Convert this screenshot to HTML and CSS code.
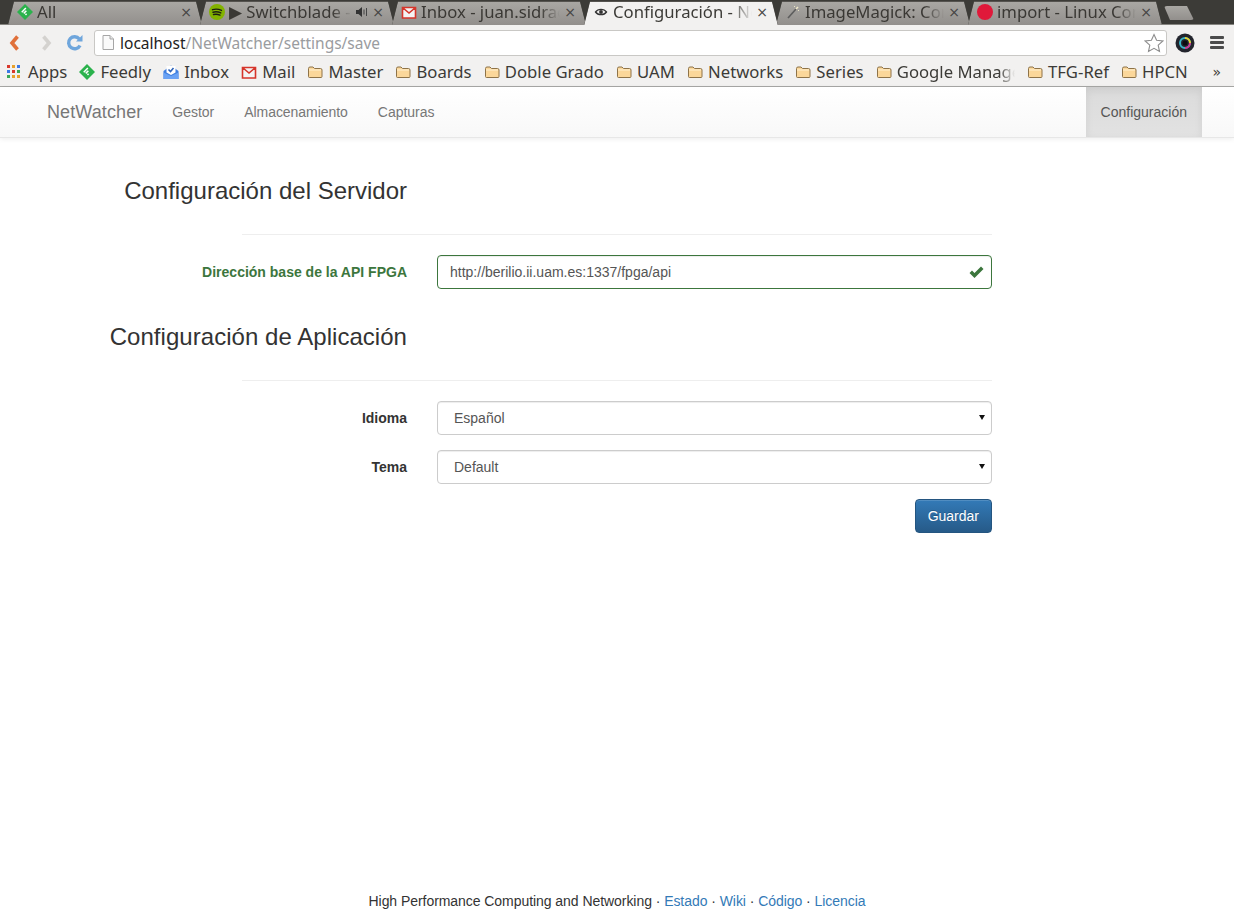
FILE: index.html
```html
<!DOCTYPE html>
<html lang="es">
<head>
<meta charset="utf-8">
<title>Configuración - NetWatcher</title>
<link rel="stylesheet" href="styles.css">
</head>
<body>
<svg class="defs" width="0" height="0" aria-hidden="true">
  <symbol id="folder" viewBox="0 0 16 16"><path d="M1.500 4.500a1.500 1.500 0 0 1 1.500-1.500h3l1.500 1.500h6a1.500 1.500 0 0 1 1.500 1.500v6.500a1 1 0 0 1-1 1h-11.500a1 1 0 0 1-1-1z" fill="#fbd79a" stroke="#8e7348" stroke-width="1"/><path d="M2 6h12" stroke="#fff1d2" stroke-width="1"/></symbol>
  <symbol id="feedly" viewBox="0 0 16 16"><path d="M8 0 16 8 8 16 0 8z" fill="#2bb24c"/><path d="M8.300 3.500 4.200 7.700l1.100 1.100L9.400 4.600zM8.800 6.200 6.200 8.800l1.100 1.100 2.600-2.600zM9 9.200l-1.100 1.100L9 11.400l1.100-1.100z" fill="#fff"/></symbol>
  <symbol id="gmail" viewBox="0 0 16 16"><path d="M1 3h14v11H1z" fill="#f4f4f4"/><path d="M1.500 14V3.500h13V14zM1.500 3.500 8 9l6.500-5.500" fill="none" stroke="#d6352b" stroke-width="1.600"/></symbol>
</svg>

<header class="browser">
  <div class="tabstrip">
    <div class="tab">
      <svg class="fav" viewBox="0 0 16 16"><use href="#feedly"/></svg>
      <span class="tabtitle">All</span><span class="tabx">×</span>
    </div>
    <div class="tab">
      <svg class="fav" viewBox="0 0 16 16"><circle cx="8" cy="8" r="8" fill="#83b300"/><path d="M3.500 5.700c3-.9 6-.7 9 .7M4 8.200c2.600-.7 5.200-.5 7.800.7M4.500 10.500c2.200-.5 4.400-.4 6.500.6" fill="none" stroke="#1d1f12" stroke-width="1.400" stroke-linecap="round"/></svg>
      <span class="tabtitle">▶ Switchblade - Spotify</span>
      <svg class="speaker" viewBox="0 0 12 10"><path d="M0 3h2.500L6 0v10L2.500 7H0z" fill="#333"/><path d="M8 2.500v5M10.500 1v8" stroke="#444" stroke-width="1"/></svg>
      <span class="tabx">×</span>
    </div>
    <div class="tab">
      <svg class="fav" viewBox="0 0 16 16"><use href="#gmail"/></svg>
      <span class="tabtitle">Inbox - juan.sidrach@uam.es</span><span class="tabx">×</span>
    </div>
    <div class="tab tab-active">
      <svg class="fav" viewBox="0 0 16 16"><path d="M2.500 8C5 4.500 11 4.500 13.500 8 11 11.500 5 11.500 2.500 8z" fill="none" stroke="#333" stroke-width="1.300"/><circle cx="8" cy="8" r="1.900" fill="#333"/></svg>
      <span class="tabtitle">Configuración - NetWatcher</span><span class="tabx">×</span>
    </div>
    <div class="tab">
      <svg class="fav" viewBox="0 0 16 16"><path d="M3 14 11 5" stroke="#5d5d5d" stroke-width="1.600"/><path d="M11 5l2-2" stroke="#f1e9c9" stroke-width="1.600"/><path d="M13 6.500h1M9.500 2v1" stroke="#e8e2c5" stroke-width="1"/></svg>
      <span class="tabtitle">ImageMagick: Command-line</span><span class="tabx">×</span>
    </div>
    <div class="tab">
      <svg class="fav" viewBox="0 0 16 16"><circle cx="8" cy="8" r="8" fill="#e0193a"/></svg>
      <span class="tabtitle">import - Linux Command</span><span class="tabx">×</span>
    </div>
    <div class="newtab"></div>
  </div>

  <div class="toolbar">
    <svg class="navbtn" viewBox="0 0 16 18"><path d="M10.500 2.500 5 9l5.500 6.500" fill="none" stroke="#e0703a" stroke-width="3.600"/></svg>
    <svg class="navbtn navbtn-fwd" viewBox="0 0 16 18"><path d="M5.500 2.500 11 9l-5.500 6.500" fill="none" stroke="#d4d2cf" stroke-width="3.600"/></svg>
    <svg class="navbtn navbtn-reload" viewBox="0 0 18 18"><path d="M14 11.500A6 6 0 1 1 13.300 5" fill="none" stroke="#6fa6dc" stroke-width="3.400"/><path d="M10 7.500h6.500V1z" fill="#6fa6dc"/></svg>
    <div class="omnibox">
      <svg class="pageicon" viewBox="0 0 12 15"><path d="M1 .5h7l3.500 3.500v10.500H1z" fill="#fafafa" stroke="#a6a6a6"/><path d="M8 .5V4h3.500" fill="#e6e6e6" stroke="#a6a6a6"/></svg>
      <span class="url"><span class="host">localhost</span>/NetWatcher/settings/save</span>
      <svg class="star" viewBox="0 0 20 20"><path d="M10 1.500l2.600 5.800 6.300.7-4.700 4.200 1.300 6.200L10 15.300l-5.500 3.100 1.300-6.200L1.100 8l6.300-.7z" fill="#fff" stroke="#8d8d8d" stroke-width="1.100"/></svg>
    </div>
    <svg class="ext" viewBox="0 0 20 20"><circle cx="10" cy="10" r="9.500" fill="#23252d"/><circle cx="10" cy="10" r="5" fill="none" stroke="#38b6c9" stroke-width="2"/><path d="M10 5a5 5 0 0 1 5 5" fill="none" stroke="#e9d12f" stroke-width="2"/><path d="M15 10a5 5 0 0 1-5 5" fill="none" stroke="#d6318f" stroke-width="2"/><circle cx="10" cy="10" r="2.500" fill="#0c0c10"/></svg>
    <div class="menu"><i></i><i></i><i></i></div>
  </div>

  <nav class="bookmarks">
    <a class="bm">
      <svg class="bmicon apps" viewBox="0 0 14 14"><g><rect x="0" y="0" width="3" height="3" fill="#d9382c"/><rect x="5" y="0" width="3" height="3" fill="#e8a12c"/><rect x="10" y="0" width="3" height="3" fill="#3b78e7"/><rect x="0" y="5" width="3" height="3" fill="#3b78e7"/><rect x="5" y="5" width="3" height="3" fill="#d9382c"/><rect x="10" y="5" width="3" height="3" fill="#3aa757"/><rect x="0" y="10" width="3" height="3" fill="#3aa757"/><rect x="5" y="10" width="3" height="3" fill="#e8a12c"/><rect x="10" y="10" width="3" height="3" fill="#e8a12c"/></g></svg>
      Apps</a>
    <a class="bm"><svg class="bmicon" viewBox="0 0 16 16"><use href="#feedly"/></svg>Feedly</a>
    <a class="bm"><svg class="bmicon" viewBox="0 0 16 16"><path d="M0.500 7 8 1.500 15.500 7v8H.5z" fill="#3f7fe0"/><path d="M3.500 2h9v6.500L8 11 3.500 8.500z" fill="#fff"/><path d="M5.500 5.500 7.500 7.500l3-3.500" fill="none" stroke="#2f63b8" stroke-width="1.600"/><path d="M.5 8.500 8 12l7.500-3.500V15H.5z" fill="#6aa2f4"/></svg>Inbox</a>
    <a class="bm"><svg class="bmicon" viewBox="0 0 16 16"><use href="#gmail"/></svg>Mail</a>
    <a class="bm"><svg class="bmicon" viewBox="0 0 16 16"><use href="#folder"/></svg>Master</a>
    <a class="bm"><svg class="bmicon" viewBox="0 0 16 16"><use href="#folder"/></svg>Boards</a>
    <a class="bm"><svg class="bmicon" viewBox="0 0 16 16"><use href="#folder"/></svg>Doble Grado</a>
    <a class="bm"><svg class="bmicon" viewBox="0 0 16 16"><use href="#folder"/></svg>UAM</a>
    <a class="bm"><svg class="bmicon" viewBox="0 0 16 16"><use href="#folder"/></svg>Networks</a>
    <a class="bm"><svg class="bmicon" viewBox="0 0 16 16"><use href="#folder"/></svg>Series</a>
    <a class="bm"><svg class="bmicon" viewBox="0 0 16 16"><use href="#folder"/></svg><span class="bmclip">Google Management</span></a>
    <a class="bm"><svg class="bmicon" viewBox="0 0 16 16"><use href="#folder"/></svg>TFG-Ref</a>
    <a class="bm"><svg class="bmicon" viewBox="0 0 16 16"><use href="#folder"/></svg>HPCN</a>
    <span class="bmmore">»</span>
  </nav>
</header>

<div class="navbar">
  <a class="brand">NetWatcher</a>
  <a class="navlink">Gestor</a>
  <a class="navlink">Almacenamiento</a>
  <a class="navlink">Capturas</a>
  <a class="navlink navlink-active">Configuración</a>
</div>

<main class="settings">
  <h3 class="section-title">Configuración del Servidor</h3>
  <hr class="rule">
  <div class="row row-ok">
    <label class="rowlabel" for="api">Dirección base de la API FPGA</label>
    <div class="field">
      <input id="api" class="control" type="text" value="http://berilio.ii.uam.es:1337/fpga/api">
      <svg class="tick" viewBox="0 0 15 12"><path d="M.5 7 3 4.500 5.500 7 12 .5 14.500 3 5.500 12z" fill="#3c763d"/></svg>
    </div>
  </div>
  <h3 class="section-title section-title-2">Configuración de Aplicación</h3>
  <hr class="rule">
  <div class="row">
    <label class="rowlabel" for="lang">Idioma</label>
    <div class="field field-select">
      <select id="lang" class="control"><option>Español</option></select>
    </div>
  </div>
  <div class="row">
    <label class="rowlabel" for="theme">Tema</label>
    <div class="field field-select">
      <select id="theme" class="control"><option>Default</option></select>
    </div>
  </div>
  <div class="actions"><button class="btn" type="button">Guardar</button></div>
</main>

<footer class="foot">High Performance Computing and Networking · <a>Estado</a> · <a>Wiki</a> · <a>Código</a> · <a>Licencia</a></footer>
</body>
</html>
```
FILE: styles.css
```css
* { box-sizing: border-box; }
html, body { margin: 0; height: 921px; overflow: hidden; }
body {
  display: flex;
  flex-direction: column;
  font: 14px/20px "Liberation Sans", Arial, sans-serif;
  color: #333;
  background: #fff;
}
.defs { position: absolute; }

/* browser chrome */
.browser { flex: none; height: 87px; background: #f2f1f0; border-bottom: 1px solid #a8a8a6; font-family: "Noto Sans", sans-serif; }
.tabstrip { display: flex; height: 25px; padding: 1px 0 0 7px; background: #3c3b37; border-bottom: 1px solid #85847f; }
.tab {
  position: relative;
  flex: none;
  display: flex;
  align-items: center;
  width: 196px;
  height: 24px;
  margin-right: -4px;
  padding: 0 11px 3px 10px;
  font-size: 16.700px;
  color: #3a3834;
  background: #55534f;
  clip-path: polygon(0 100%, 1px 100%, 7px 0, 189px 0, 195px 100%, 196px 100%);
}
.tab::before {
  content: "";
  position: absolute;
  inset: 1px 0 0;
  background: linear-gradient(#a9a7a3, #928f8c);
  clip-path: polygon(1px 100%, 7px 0, 189px 0, 195px 100%);
}
.tab > * { position: relative; }
.tab-active { z-index: 2; color: #3c3b37; background: #55534f; }
.tab-active::before { background: #f2f1f0; inset: 1px 0 -1px; }
.fav { flex: none; width: 16px; height: 16px; margin-right: 4px; }
.tabtitle {
  flex: 1;
  min-width: 0;
  white-space: nowrap;
  overflow: hidden;
  -webkit-mask-image: linear-gradient(to left, transparent, #000 20px);
  mask-image: linear-gradient(to left, transparent, #000 20px);
}
.speaker { flex: none; width: 12px; height: 10px; margin-left: 4px; }
.tabx { flex: none; width: 12px; margin-left: 4px; font-size: 14px; line-height: 20px; text-align: center; color: #444; font-family: "DejaVu Sans", sans-serif; }
.newtab {
  position: relative;
  flex: none;
  width: 30px;
  height: 14px;
  margin: 5px 0 0 5px;
  border-radius: 3px;
  background: linear-gradient(#a9a7a3, #928f8c);
  clip-path: polygon(0 0, 23px 0, 30px 100%, 6px 100%);
}

.toolbar { display: flex; align-items: center; height: 35px; padding: 0 0 0 7px; }
.navbtn { flex: none; width: 16px; height: 18px; margin-right: 15px; }
.navbtn-fwd { margin-right: 12px; }
.navbtn-reload { width: 18px; margin-right: 10px; }
.omnibox {
  flex: none;
  display: flex;
  align-items: center;
  width: 1073px;
  height: 26px;
  padding: 0 2px 0 7px;
  background: #fff;
  border: 1px solid #c9c8c5;
  border-radius: 3px;
}
.pageicon { flex: none; width: 12px; height: 15px; margin-right: 6px; }
.url { flex: 1; font-size: 15.500px; color: #9a9c9f; white-space: nowrap; }
.host { color: #222; }
.star { flex: none; width: 20px; height: 20px; }
.ext { flex: none; width: 20px; height: 20px; margin-left: 8px; }
.menu { flex: none; display: flex; flex-direction: column; gap: 2px; width: 14px; margin-left: 15px; }
.menu i { display: block; height: 3px; background: #4b4b4b; border-radius: 1px; }

.bookmarks { display: flex; align-items: center; height: 25px; padding: 0 0 2px 7px; gap: 12.200px; font-size: 16.700px; color: #3c3b37; white-space: nowrap; }
.bm { flex: none; display: flex; align-items: center; gap: 5px; }
.bmicon { flex: none; width: 16px; height: 16px; }
.apps { width: 14px; height: 14px; margin-right: 2px; }
.bmclip {
  display: block;
  width: 118px;
  overflow: hidden;
  -webkit-mask-image: linear-gradient(to left, transparent, #000 16px);
  mask-image: linear-gradient(to left, transparent, #000 16px);
}
.bmmore { margin-left: auto; margin-right: 13px; font-size: 14px; font-family: "DejaVu Sans", sans-serif; }

/* application navbar */
.navbar {
  flex: none;
  display: flex;
  height: 51px;
  padding: 0 32px;
  background: linear-gradient(#fff, #f8f8f8);
  border-bottom: 1px solid #e7e7e7;
  box-shadow: 0 1px 5px rgba(0, 0, 0, .075);
}
.brand { padding: 15px; font-size: 18px; color: #777; letter-spacing: .1px; }
.navlink { padding: 15px; color: #777; letter-spacing: -.04px; }
.navlink-active {
  margin-left: auto;
  color: #555;
  letter-spacing: 0;
  background: linear-gradient(#dbdbdb, #e2e2e2);
  box-shadow: inset 0 3px 9px rgba(0, 0, 0, .075);
}

/* form */
.settings { flex: 1; padding: 0 0 0 47px; }
.section-title {
  width: 360px;
  margin: 40px 0 0;
  font-size: 24px;
  line-height: 26px;
  font-weight: 500;
  text-align: right;
  color: #333;
}
.section-title-2 { margin-top: 35px; letter-spacing: .04px; }
.rule { width: 750px; margin: 30px 0 20px 195px; border: 0; border-top: 1px solid #eee; }
.row { display: grid; grid-template-columns: 360px 555px; column-gap: 30px; align-items: center; margin-bottom: 15px; }
.rowlabel { font-weight: 700; text-align: right; }
.row-ok .rowlabel { color: #3c763d; }
.field { position: relative; }
.control {
  display: block;
  width: 100%;
  height: 34px;
  padding: 6px 12px;
  font: inherit;
  color: #555;
  background: #fff;
  border: 1px solid #ccc;
  border-radius: 4px;
  box-shadow: inset 0 1px 1px rgba(0, 0, 0, .075);
  appearance: none;
  -webkit-appearance: none;
}
select.control { padding-left: 16px; }
.field-select::after {
  content: "";
  position: absolute;
  right: 7px;
  top: 14px;
  border-style: solid;
  border-width: 5px 3.500px 0;
  border-color: #111 transparent transparent;
}
.row-ok .control { border-color: #3c763d; }
.tick { position: absolute; right: 8px; top: 11px; width: 15px; height: 12px; }
.actions { display: flex; justify-content: flex-end; width: 945px; }
.btn {
  height: 34px;
  padding: 6px 12px;
  font: inherit;
  color: #fff;
  background: linear-gradient(#337ab7, #265a88);
  border: 1px solid #245580;
  border-radius: 4px;
  text-shadow: 0 -1px 0 rgba(0, 0, 0, .2);
  box-shadow: inset 0 1px 0 rgba(255, 255, 255, .15);
}

/* footer */
.foot { flex: none; height: 30px; padding-bottom: 10px; text-align: center; color: #333; letter-spacing: -.055px; }
.foot a { color: #337ab7; }
```
